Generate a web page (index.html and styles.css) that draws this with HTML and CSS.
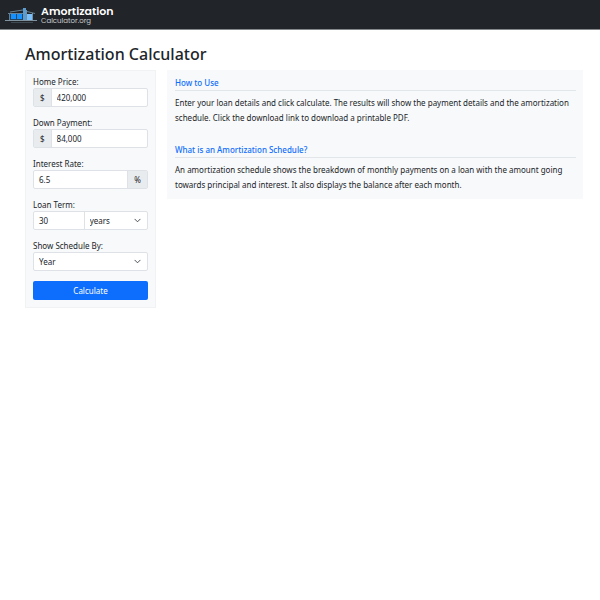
FILE: index.html
```html
<!DOCTYPE html>
<html lang="en">
<head>
<meta charset="utf-8">
<title>Amortization Calculator</title>
<link rel="stylesheet" href="styles.css">
</head>
<body>
<header class="navbar">
  <a class="brand" href="#">
    <svg class="brand-icon" viewBox="0 0 32 19" aria-hidden="true">
      <path d="M5 8h13v7H5z" fill="#24455f"/>
      <path d="M6 9h5v5H6zM12 9h5v5h-5z" fill="#1592ff"/>
      <path d="M18 3h3v12h-3z" fill="#5b9bcd"/>
      <path d="M22 9h5v6h-5z" fill="#7cc0fa"/>
      <path d="M21.500 5v10M27.500 8v7" stroke="#6b92b0" fill="none"/>
      <path d="M3 8.500h15M5 7l13-2M22 6.500l8 2M4.500 9v6" stroke="#7896aa" stroke-width=".8" fill="none"/>
      <path d="M0 15.500h32" stroke="#7f929f"/>
      <path d="M6 17.500h22" stroke="#3e4a52"/>
    </svg>
    <span class="brand-text"><strong class="brand-name">Amortization</strong><span class="brand-domain">Calculator.org</span></span>
  </a>
</header>
<main class="container">
  <h1 class="title">Amortization Calculator</h1>
  <div class="layout">
    <form class="panel form">
      <div class="field">
        <label for="price">Home Price:</label>
        <div class="group"><span class="addon">$</span><input id="price" type="text" value="420,000"></div>
      </div>
      <div class="field">
        <label for="down">Down Payment:</label>
        <div class="group"><span class="addon">$</span><input id="down" type="text" value="84,000"></div>
      </div>
      <div class="field">
        <label for="rate">Interest Rate:</label>
        <div class="group"><input id="rate" type="text" value="6.5"><span class="addon addon-end">%</span></div>
      </div>
      <div class="field">
        <label for="term">Loan Term:</label>
        <div class="group">
          <input class="term" id="term" type="text" value="30">
          <div class="select unit">
            <select aria-label="Loan term unit"><option>years</option><option>months</option></select>
            <svg class="chevron" viewBox="0 0 16 16" aria-hidden="true"><path d="m2 5 6 6 6-6"/></svg>
          </div>
        </div>
      </div>
      <div class="field">
        <label for="schedule">Show Schedule By:</label>
        <div class="group">
          <div class="select">
            <select id="schedule"><option>Year</option><option>Month</option></select>
            <svg class="chevron" viewBox="0 0 16 16" aria-hidden="true"><path d="m2 5 6 6 6-6"/></svg>
          </div>
        </div>
      </div>
      <button class="submit" type="button">Calculate</button>
    </form>
    <div class="panel info">
      <section>
        <h2>How to Use</h2>
        <p>Enter your loan details and click calculate. The results will show the payment details and the amortization schedule. Click the download link to download a printable PDF.</p>
      </section>
      <section>
        <h2>What is an Amortization Schedule?</h2>
        <p>An amortization schedule shows the breakdown of monthly payments on a loan with the amount going towards principal and interest. It also displays the balance after each month.</p>
      </section>
    </div>
  </div>
</main>
</body>
</html>
```
FILE: styles.css
```css
* { box-sizing: border-box; }

body {
  margin: 0;
  background: #fff;
  color: #212529;
  font: 8px/12px "Noto Sans", sans-serif;
}

.navbar {
  display: flex;
  align-items: flex-start;
  height: 30px;
  padding: 5px;
  background: #212529;
  border-bottom: 1px solid #85888b;
}

.brand {
  display: flex;
  align-items: flex-start;
  gap: 4px;
  color: #fff;
  text-decoration: none;
}

.brand-icon { width: 32px; height: 19px; }

.brand-text {
  display: flex;
  flex-direction: column;
  padding-top: 1px;
  font-family: Poppins, Inter, sans-serif;
}

.brand-name { font-size: 11px; line-height: 10px; font-weight: 600; }
.brand-domain { font-size: 7px; line-height: 9px; font-weight: 400; color: #c8cacc; }

.container { padding: 14px 17px 15px 25px; }

.title {
  margin: 0 0 6px;
  font-size: 16px;
  line-height: 20px;
  font-weight: 500;
}

.layout {
  display: grid;
  grid-template-columns: 131px 1fr;
  gap: 11px;
  align-items: start;
}

.panel { background: #f8f9fa; border: 1px solid #f1f2f4; }

.form { padding: 5px 7px 7px; }

.field { margin-bottom: 10px; }
.field label { display: block; }

.group {
  display: flex;
  height: 19px;
  background: #fff;
  border: 1px solid #dee2e6;
  border-radius: 2px;
}

.group input,
.group select {
  flex: 1;
  width: 100%;
  min-width: 0;
  padding: 0 5px;
  border: 0;
  background: transparent;
  color: inherit;
  font: inherit;
}

.group select { appearance: none; height: 100%; }
.group .term { flex: 0 0 44%; }

.addon {
  padding: 3px 6px;
  background: #e9ecef;
  border-right: 1px solid #dee2e6;
}

.addon-end { border-right: 0; border-left: 1px solid #dee2e6; }

.select { position: relative; flex: 1; min-width: 0; }
.unit { border-left: 1px solid #dee2e6; }

.chevron {
  position: absolute;
  top: 5px;
  right: 6px;
  width: 7px;
  height: 7px;
  fill: none;
  stroke: #343a40;
  stroke-width: 2;
  stroke-linecap: round;
  stroke-linejoin: round;
  pointer-events: none;
}

.submit {
  display: block;
  width: 100%;
  height: 19px;
  padding: 0;
  border: 0;
  border-radius: 2px;
  background: #0d6efd;
  color: #fff;
  font: inherit;
}

.info { padding: 6px; padding-left: 7px; border-color: #f8f9fa; }
.info section + section { margin-top: 19px; }

.info h2 {
  margin: 0 0 4px;
  padding-bottom: 1px;
  border-bottom: 1px solid #e3e6e9;
  color: #0d6efd;
  font-size: 8px;
  line-height: 12px;
  font-weight: 500;
}

.info p { margin: 0; line-height: 15px; }
```
